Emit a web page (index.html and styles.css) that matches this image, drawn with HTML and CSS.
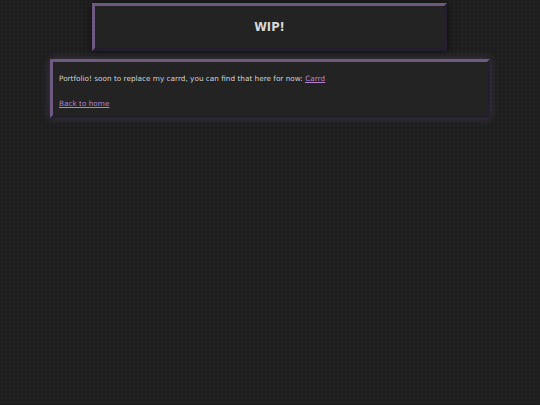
FILE: index.html
```html
<!DOCTYPE html>
<html lang="en">
<head>
<meta charset="utf-8">
<title>WIP</title>
<link rel="stylesheet" href="styles.css">
</head>
<body>
<div class="page">
  <header class="banner">
    <h1 class="banner-title">WIP!</h1>
  </header>
  <main class="card">
    <p class="card-text">Portfolio! soon to replace my carrd, you can find that here for now: <a class="link" href="#">Carrd</a></p>
    <p class="card-text"><a class="link" href="#">Back to home</a></p>
  </main>
</div>
</body>
</html>
```

FILE: styles.css
```css
html, body {
  margin: 0;
  padding: 0;
}
body {
  background-color: #1e1e1e;
  background-image: radial-gradient(rgba(255,255,255,0.025) 1px, transparent 1px);
  background-size: 4px 4px;
  font-family: "DejaVu Sans", Verdana, sans-serif;
  color: #d2d2d2;
  min-height: 405px;
}
.page {
  width: 440px;
  margin: 0 auto;
  padding-top: 3px;
  display: flex;
  flex-direction: column;
  gap: 8px;
}
.banner {
  margin: 0 43px 0 42px;
  background: #232323;
  border: 3px outset #6e5a80;
  box-shadow: 0 0 8px rgba(0,0,0,0.6);
  height: 42px;
  display: flex;
  align-items: center;
  justify-content: center;
}
.banner-title {
  margin: 0;
  font-size: 11.5px;
  font-weight: bold;
  color: #d8d8d8;
}
.card {
  background: #232323;
  border: 3px outset #6e5a80;
  box-shadow: 0 0 9px rgba(120,95,140,0.4);
  padding: 12px 6px 6px;
  display: flex;
  flex-direction: column;
  gap: 15px;
}
.card-text {
  margin: 0;
  font-size: 7.3px;
  line-height: 10px;
}
.link {
  color: #b585cc;
}
```
